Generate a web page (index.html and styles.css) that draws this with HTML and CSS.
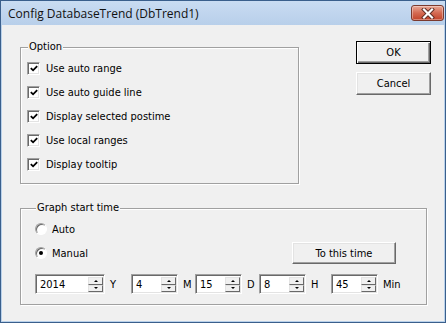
FILE: index.html
```html
<!DOCTYPE html>
<html lang="en">
<head>
    <meta charset="UTF-8">
    <title>Config DatabaseTrend (DbTrend1)</title>
    <link rel="stylesheet" href="styles.css">
</head>
<body>

    <div class="window">
        <div class="titlebar">
            <span class="title">Config DatabaseTrend (DbTrend1)</span>
            <span class="close">
                <svg width="16" height="11" viewBox="0 0 16 11">
                    <path d="M4 1.5 L12 9.5 M12 1.5 L4 9.5" stroke="#5a2a22" stroke-width="4" stroke-linecap="square"/>
                    <path d="M4 1.5 L12 9.5 M12 1.5 L4 9.5" stroke="#fff" stroke-width="2.2" stroke-linecap="square"/>
                </svg>
            </span>
        </div>

        <div class="client">
            <div class="top">
                <fieldset class="group options">
                    <legend>Option</legend>
                    <label class="check"><span class="box"><svg width="11" height="11" viewBox="0 0 11 11"><polyline points="2,5 4.5,7.5 9,3" fill="none" stroke="#000" stroke-width="2"/></svg></span>Use auto range</label>
                    <label class="check"><span class="box"><svg width="11" height="11" viewBox="0 0 11 11"><polyline points="2,5 4.5,7.5 9,3" fill="none" stroke="#000" stroke-width="2"/></svg></span>Use auto guide line</label>
                    <label class="check"><span class="box"><svg width="11" height="11" viewBox="0 0 11 11"><polyline points="2,5 4.5,7.5 9,3" fill="none" stroke="#000" stroke-width="2"/></svg></span>Display selected postime</label>
                    <label class="check"><span class="box"><svg width="11" height="11" viewBox="0 0 11 11"><polyline points="2,5 4.5,7.5 9,3" fill="none" stroke="#000" stroke-width="2"/></svg></span>Use local ranges</label>
                    <label class="check"><span class="box"><svg width="11" height="11" viewBox="0 0 11 11"><polyline points="2,5 4.5,7.5 9,3" fill="none" stroke="#000" stroke-width="2"/></svg></span>Display tooltip</label>
                </fieldset>

                <div class="actions">
                    <button class="btn default">OK</button>
                    <button class="btn">Cancel</button>
                </div>
            </div>

            <fieldset class="group start">
                <legend>Graph start time</legend>
                <div class="mode-row">
                    <label class="radio"><span class="dot"></span>Auto</label>
                </div>
                <div class="mode-row">
                    <label class="radio"><span class="dot on"></span>Manual</label>
                    <button class="btn now">To this time</button>
                </div>
                <div class="spins">
                    <div class="field"><span class="edit wide"><span class="val">2014</span><span class="spin"><i class="up"></i><i class="down"></i></span></span><span class="unit">Y</span></div>
                    <div class="field"><span class="edit"><span class="val">4</span><span class="spin"><i class="up"></i><i class="down"></i></span></span><span class="unit">M</span></div>
                    <div class="field"><span class="edit"><span class="val">15</span><span class="spin"><i class="up"></i><i class="down"></i></span></span><span class="unit">D</span></div>
                    <div class="field"><span class="edit"><span class="val">8</span><span class="spin"><i class="up"></i><i class="down"></i></span></span><span class="unit">H</span></div>
                    <div class="field"><span class="edit"><span class="val">45</span><span class="spin"><i class="up"></i><i class="down"></i></span></span><span class="unit">Min</span></div>
                </div>
            </fieldset>
        </div>
    </div>

</body>
</html>
```

FILE: styles.css
```css
* {
    margin: 0;
    padding: 0;
    box-sizing: border-box;
}

body {
    width: 446px;
    height: 323px;
    background: #f0f0f0;
    font-family: 'DejaVu Sans Condensed', 'Liberation Sans', sans-serif;
    font-size: 11px;
    color: #000;
}

.window {
    width: 446px;
    height: 323px;
    border: 1px solid #3a5f8c;
    background: #b9d1ea;
    display: flex;
    flex-direction: column;
}

.titlebar {
    height: 24px;
    display: flex;
    align-items: center;
    justify-content: space-between;
    padding: 0 1px 0 7px;
    background: linear-gradient(#c9dcf2, #b8cfea);
}

.title {
    font-family: 'Open Sans', 'Noto Sans', sans-serif;
    font-size: 12px;
    color: #111;
}

.close {
    width: 33px;
    height: 16px;
    display: flex;
    align-items: center;
    justify-content: center;
    border: 1px solid #7b3a2e;
    border-radius: 3px;
    background: linear-gradient(#e9a896, #d46a52 50%, #c2432a);
    box-shadow: inset 0 0 0 1px rgba(255, 255, 255, 0.35);
}

.client {
    flex: 1;
    margin: 0 1px 1px 1px;
    background: #f0f0f0;
    padding: 15px 13px 0 18px;
}

.top {
    display: flex;
    justify-content: space-between;
    margin-bottom: 17px;
}

/* group boxes */
.group {
    border: 1px solid #a0a0a0;
    box-shadow: 1px 1px 0 #fff, inset 1px 1px 0 #fff;
}

.group legend {
    margin-left: 1px;
    padding: 0 1px;
    line-height: 14px;
    background: #f0f0f0;
}

.options {
    width: 279px;
    height: 144px;
    padding: 2px 6px 0 6px;
}

.check {
    height: 24px;
    display: flex;
    align-items: center;
    gap: 6px;
}

.box {
    width: 13px;
    height: 13px;
    display: flex;
    align-items: center;
    justify-content: center;
    background: #fff;
    border: 1px solid;
    border-color: #a0a0a0 #fff #fff #a0a0a0;
    box-shadow: inset 1px 1px 0 #696969, inset -1px -1px 0 #e3e3e3;
}

.box svg {
    margin: 1px 0 0 1px;
}

/* buttons */
.actions {
    display: flex;
    flex-direction: column;
    gap: 8px;
    margin-top: 1px;
}

.btn {
    width: 75px;
    height: 23px;
    font: inherit;
    color: #000;
    background: #f0f0f0;
    border: 1px solid;
    border-color: #fff #696969 #696969 #fff;
    box-shadow: inset -1px -1px 0 #a0a0a0, inset 1px 1px 0 #e3e3e3;
}

.btn.default {
    border-color: #000;
    box-shadow: inset 1px 1px 0 #fff, inset -1px -1px 0 #696969, inset -2px -2px 0 #a0a0a0;
}

.btn.now {
    width: 104px;
    height: 22px;
    margin-right: 30px;
}

/* start time */
.start {
    width: 407px;
    height: 104px;
    padding: 2px 0 0 14px;
}

.mode-row {
    height: 24px;
    display: flex;
    align-items: center;
    justify-content: space-between;
}

.radio {
    display: flex;
    align-items: center;
    gap: 5px;
}

.dot {
    width: 12px;
    height: 12px;
    border-radius: 50%;
    background: #fff;
    border: 1px solid;
    border-color: #a0a0a0 #fff #fff #a0a0a0;
    box-shadow: inset 1px 1px 0 #696969;
    display: flex;
    align-items: center;
    justify-content: center;
}

.dot.on::after {
    content: "";
    width: 4px;
    height: 4px;
    border-radius: 50%;
    background: #000;
}

.spins {
    margin-top: 9px;
    display: grid;
    grid-template-columns: 96px 64px 64px 72px auto;
}

.field {
    display: flex;
    align-items: center;
}

.edit {
    width: 47px;
    height: 20px;
    display: flex;
    align-items: stretch;
    background: #fff;
    border: 1px solid;
    border-color: #a0a0a0 #fff #fff #a0a0a0;
    box-shadow: inset 1px 1px 0 #696969, inset -1px -1px 0 #e3e3e3;
    padding: 2px 1px 1px 2px;
}

.edit.wide {
    width: 70px;
}

.val {
    flex: 1;
    padding-left: 2px;
    line-height: 15px;
}

.spin {
    width: 15px;
    display: flex;
    flex-direction: column;
}

.spin i {
    flex: 1;
    background: #f0f0f0;
    border: 1px solid;
    border-color: #e3e3e3 #696969 #696969 #e3e3e3;
    display: flex;
    align-items: center;
    justify-content: center;
}

.spin i::after {
    content: "";
    border-left: 2px solid transparent;
    border-right: 2px solid transparent;
}

.spin .up::after {
    border-bottom: 2px solid #000;
}

.spin .down::after {
    border-top: 2px solid #000;
}

.unit {
    margin-left: 5px;
}
```
